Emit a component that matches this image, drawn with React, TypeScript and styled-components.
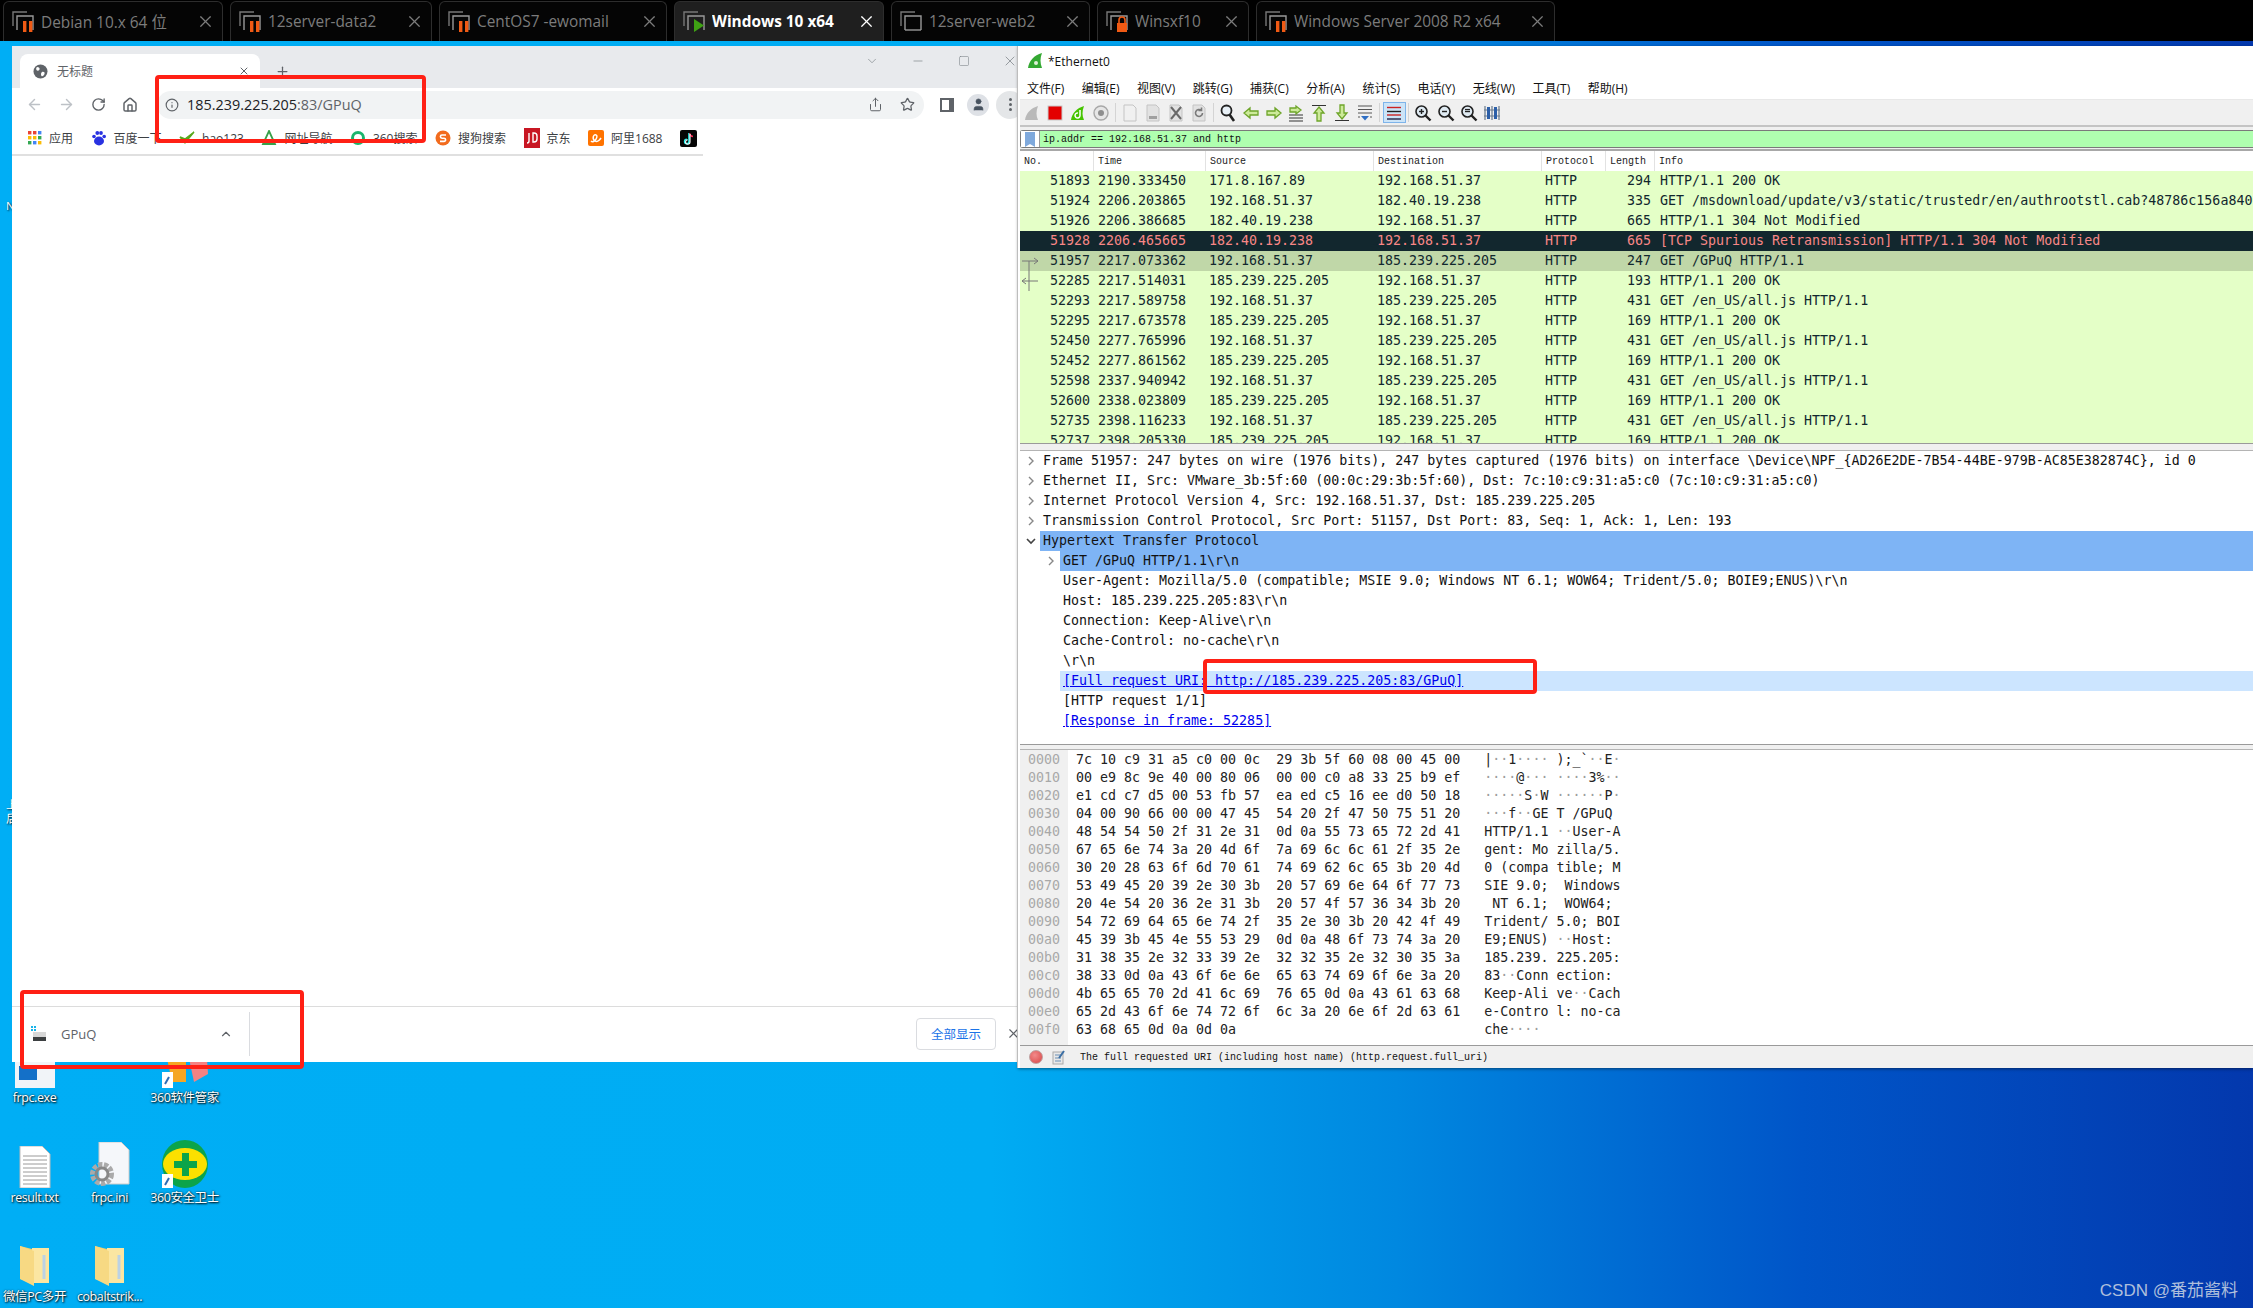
import React from "react";
import styled, { createGlobalStyle } from "styled-components";
import { ArrowLeft, ArrowRight, RotateCw, Home, Info, Share, Star, ChevronUp, ChevronDown, Minus, Square, X, Plus, User } from "lucide-react";

const MONO = `"DejaVu Sans Mono", "Liberation Mono", monospace`;
const SMALLMONO = `"Liberation Mono", monospace`;
const UI = `"Open Sans", "Noto Sans CJK SC", sans-serif`;

const Global = createGlobalStyle`
  html, body { margin: 0; padding: 0; background: #00aef5; overflow: hidden; }
  * { box-sizing: border-box; }
`;

const Screen = styled.div`
  position: relative;
  width: 2253px;
  height: 1308px;
  overflow: hidden;
  font-family: ${UI};
  background: linear-gradient(90deg, #00aef5 0%, #00acf3 44%, #0088e0 62%, #0055c8 80%, #0338ad 100%);
`;

/* ---------- VM tab bar ---------- */
const TabBar = styled.div`
  display: flex;
  gap: 7px;
  height: 41px;
  padding: 1px 0 0 3px;
  background: #000;
`;
const Tab = styled.div<{ $w: number; $active?: boolean }>`
  display: flex;
  align-items: center;
  width: ${(p) => p.$w}px;
  padding: 0 7px 0 8px;
  gap: 6px;
  border: 1px solid #2d2d2d;
  border-bottom: none;
  border-radius: 6px 6px 0 0;
  background: ${(p) => (p.$active ? "#1f1f1f" : "#050505")};
  color: ${(p) => (p.$active ? "#fff" : "#7c7c7c")};
  font-size: 15.4px;
  font-weight: ${(p) => (p.$active ? 700 : 400)};
  white-space: nowrap;
`;
const TabLabel = styled.span`
  flex: 1;
  overflow: hidden;
`;

type VmState = "pause" | "play" | "lock" | "none";
const VmIcon = ({ state }: { state: VmState }) => (
  <svg width="23" height="22" viewBox="0 0 23 22" fill="none">
    <path d="M1 15V1h14" stroke="#777" strokeWidth="1.4" />
    <path d="M5 19V5h16v14" stroke="#999" strokeWidth="1.4" />
    {state === "none" && <path d="M5 19h16" stroke="#999" strokeWidth="1.4" />}
    {state === "pause" && (
      <>
        <rect x="11" y="10" width="3.4" height="11" fill="#f05a14" />
        <rect x="17" y="10" width="3.4" height="11" fill="#f05a14" />
      </>
    )}
    {state === "play" && <path d="M11 8l10 6.5-10 6.5z" fill="#3fa214" />}
    {state === "lock" && (
      <>
        <rect x="11" y="12" width="10" height="9" fill="#f05a14" />
        <path d="M13 12V9a3 3 0 016 0v3" stroke="#f05a14" strokeWidth="1.6" />
      </>
    )}
  </svg>
);

/* ---------- Chrome window ---------- */
const BrowserWindow = styled.div`
  position: absolute;
  left: 12px;
  top: 46px;
  width: 1006px;
  height: 1016px;
  display: flex;
  flex-direction: column;
  background: #fff;
`;
const ChromeStrip = styled.div`
  display: flex;
  align-items: flex-end;
  height: 42px;
  background: #e8eaed;
  color: #5f6368;
`;
const ChromeTab = styled.div`
  display: flex;
  align-items: center;
  width: 240px;
  height: 34px;
  margin-left: 8px;
  padding: 0 10px 0 13px;
  gap: 9px;
  background: #fff;
  border-radius: 8px 8px 0 0;
  font-size: 12px;
  color: #5f6368;
`;
const ChromeTabTitle = styled.span`
  flex: 1;
`;
const NewTab = styled.div`
  display: flex;
  align-items: center;
  justify-content: center;
  width: 24px;
  height: 24px;
  margin: 0 0 5px 10px;
`;
const Caption = styled.div`
  display: flex;
  align-items: center;
  gap: 30px;
  margin-left: auto;
  align-self: flex-start;
  height: 30px;
  color: #80868b;
`;
const CaptionBtn = styled.div`
  display: flex;
  justify-content: center;
  width: 16px;
`;
const ChromeToolbar = styled.div`
  display: flex;
  align-items: center;
  height: 34px;
  padding: 0 0 1px 6px;
  color: #5f6368;
`;
const NavBtn = styled.div<{ $dim?: boolean }>`
  display: flex;
  align-items: center;
  justify-content: center;
  flex: none;
  width: 32px;
  color: ${(p) => (p.$dim ? "#bdc1c6" : "#5f6368")};
`;
const Omnibox = styled.div`
  display: flex;
  align-items: center;
  flex: none;
  width: 767px;
  height: 28px;
  margin-left: 11px;
  padding: 0 8px;
  gap: 8px;
  border-radius: 14px;
  background: #f1f3f4;
  font-size: 14.4px;
  color: #202124;
`;
const Url = styled.span`
  flex: 1;
`;
const UrlDim = styled.span`
  color: #5f6368;
`;
const OmniIcons = styled.div`
  display: flex;
  gap: 17px;
  padding-right: 1px;
`;
const SidePanel = styled.div`
  flex: none;
  width: 14px;
  height: 14px;
  margin-left: 16px;
  border: 2px solid #5f6368;
  border-right-width: 5px;
  background: #fff;
`;
const Avatar = styled.div`
  display: flex;
  align-items: center;
  justify-content: center;
  flex: none;
  width: 22px;
  height: 22px;
  margin-left: 13px;
  border-radius: 50%;
  background: #dee1e6;
  color: #47525f;
`;
const MenuDots = styled.div`
  display: flex;
  flex-direction: column;
  align-items: center;
  justify-content: center;
  flex: none;
  gap: 2px;
  width: 28px;
  height: 28px;
  margin-left: 7px;
  border-radius: 50%;
  background: #e4e6e8;
`;
const Dot = styled.i`
  width: 3px;
  height: 3px;
  border-radius: 50%;
  background: #5f6368;
`;
const Bookmarks = styled.div`
  display: flex;
  align-items: center;
  height: 34px;
  width: 691px;
  padding-left: 16px;
  gap: 17.5px;
  border-bottom: 2px solid #e0e0e0;
  font-size: 12px;
  color: #3c4043;
  white-space: nowrap;
`;
const Bookmark = styled.div`
  display: flex;
  align-items: center;
  gap: 7px;
`;
const PageBody = styled.div`
  flex: 1;
`;
const DownloadBar = styled.div`
  display: flex;
  align-items: center;
  height: 56px;
  border-top: 1px solid #dcdcdc;
  padding: 0 0 2px 18px;
  background: #fff;
`;
const DownloadName = styled.span`
  margin-left: 14px;
  width: 158px;
  font-size: 13px;
  color: #5f6368;
`;
const DownloadDivider = styled.div`
  width: 1px;
  height: 44px;
  margin-left: 16px;
  background: #dadce0;
`;
const ShowAll = styled.div`
  display: flex;
  align-items: center;
  justify-content: center;
  width: 80px;
  height: 32px;
  margin-left: auto;
  border: 1px solid #dadce0;
  border-radius: 4px;
  font-size: 12.5px;
  color: #1a73e8;
`;
const BarClose = styled.div`
  display: flex;
  width: 25px;
  margin-right: -3px;
  justify-content: flex-end;
  color: #5f6368;
`;

/* ---------- Wireshark window ---------- */
const WiresharkWindow = styled.div`
  position: absolute;
  left: 1018px;
  top: 46px;
  width: 1235px;
  height: 1022px;
  display: flex;
  flex-direction: column;
  padding-left: 2px;
  background: #fff;
  box-shadow: -1px 0 0 #bdbdbd, 0 1px 3px rgba(0, 0, 0, 0.45);
  color: #111;
`;
const TitleBar = styled.div`
  display: flex;
  align-items: center;
  gap: 5px;
  height: 30px;
  padding-left: 7px;
  font-size: 12px;
`;
const MenuBar = styled.div`
  display: flex;
  align-items: center;
  height: 24px;
  padding-left: 7px;
  gap: 17.5px;
  font-size: 12px;
  border-bottom: 1px solid #e8e8e8;
`;
const MenuItem = styled.span`
  letter-spacing: 0;
`;
const WsToolbar = styled.div`
  display: flex;
  align-items: center;
  height: 27px;
  padding-left: 1px;
  background: #f0f0f0;
  border-bottom: 2px solid #c4c4c4;
`;
const ToolBtn = styled.div<{ $on?: boolean }>`
  display: flex;
  align-items: center;
  justify-content: center;
  width: 22.85px;
  height: 21px;
  border: 1px solid ${(p) => (p.$on ? "#7eb4ea" : "transparent")};
  background: ${(p) => (p.$on ? "#cce4f7" : "transparent")};
`;
const ToolSep = styled.div`
  width: 1px;
  height: 19px;
  margin: 0 2.7px;
  background: #d4d4d4;
`;
const FilterWrap = styled.div`
  height: 24px;
  padding: 3px 0;
  background: #f0f0f0;
  border-bottom: 2px solid #a8a8a8;
`;
const FilterBar = styled.div`
  display: flex;
  align-items: center;
  height: 18px;
  background: #afffaf;
  border-top: 1px solid #7a7a7a;
  border-bottom: 1px solid #7a7a7a;
  border-left: 1px solid #7a7a7a;
  border-radius: 3px 0 0 3px;
  font: 10px ${SMALLMONO};
  color: #111;
`;
const BookmarkCell = styled.div`
  display: flex;
  align-items: center;
  justify-content: center;
  width: 19px;
  height: 100%;
  margin-right: 3px;
  background: #fff;
  border-right: 1px solid #9a9a9a;
`;
const PacketHead = styled.div`
  display: grid;
  grid-template-columns: 73px 112px 168px 168px 64px 49px 1fr;
  height: 20px;
  background: #fff;
  font: 10px ${SMALLMONO};
  color: #222;
`;
const HeadCell = styled.div<{ $first?: boolean }>`
  display: flex;
  align-items: center;
  padding: 1px 0 0 4px;
  border-left: ${(p) => (p.$first ? "none" : "1px solid #e2e2e2")};
`;
const PacketList = styled.div`
  height: 272px;
  overflow: hidden;
`;
const PacketRow = styled.div<{ $kind: string }>`
  display: grid;
  grid-template-columns: 70px 119px 168px 168px 60px 46px 1fr;
  height: 20px;
  font: 13.3px/20px ${MONO};
  white-space: nowrap;
  overflow: hidden;
  background: ${(p) => (p.$kind === "dark" ? "#12272e" : p.$kind === "sel" ? "#c0d7a8" : "#e4ffc7")};
  color: ${(p) => (p.$kind === "dark" ? "#f78787" : "#12272e")};
`;
const NoCell = styled.div`
  position: relative;
  text-align: right;
`;
const RelMark = styled.svg`
  position: absolute;
  left: 0;
  top: 0;
`;
const TimeCell = styled.div`
  padding-left: 8px;
`;
const LenCell = styled.div`
  text-align: right;
`;
const InfoCell = styled.div`
  padding-left: 9px;
`;
const Splitter = styled.div<{ $h: number }>`
  height: ${(p) => p.$h}px;
  flex: none;
  background: #f0f0f0;
  border-top: 1px solid #9a9a9a;
  border-bottom: 1px solid #b4b4b4;
`;
const Details = styled.div`
  height: 293px;
  font: 13.3px/20px ${MONO};
  color: #111;
  white-space: nowrap;
  overflow: hidden;
`;
const DetailRow = styled.div<{ $indent: number }>`
  display: flex;
  height: 20px;
  padding-left: ${(p) => 2 + p.$indent * 20}px;
`;
const Twisty = styled.div`
  display: flex;
  align-items: center;
  justify-content: center;
  width: 18px;
  color: #777;
`;
const DetailLabel = styled.div<{ $sel?: string; $link?: boolean }>`
  flex: 1;
  padding-left: 3px;
  background: ${(p) => (p.$sel === "blue" ? "#7eb4f5" : p.$sel === "light" ? "#cce5ff" : "transparent")};
  color: ${(p) => (p.$link ? "#0000ee" : "#111")};
  text-decoration: ${(p) => (p.$link ? "underline" : "none")};
`;
const Hex = styled.div`
  display: flex;
  flex: 1;
  font: 13.3px/18px ${MONO};
  white-space: pre;
`;
const HexGutter = styled.div`
  width: 48px;
  padding: 1px 0 0 8px;
  background: #f0f0f0;
  color: #a8a8a8;
`;
const HexBody = styled.div`
  flex: 1;
  padding: 1px 0 0 8px;
  color: #222;
`;
const Unprintable = styled.span`
  color: #9c9c9c;
`;
const StatusBar = styled.div`
  display: flex;
  align-items: center;
  flex: none;
  height: 23px;
  padding-left: 9px;
  gap: 9px;
  background: #f0f0f0;
  border-top: 1px solid #9a9a9a;
  font: 10px ${SMALLMONO};
  color: #111;
`;
const StatusText = styled.span`
  margin-left: 5px;
`;
const StatusDot = styled.div`
  width: 14px;
  height: 14px;
  border-radius: 50%;
  background: radial-gradient(circle at 40% 35%, #f28a8a, #d84545);
  border: 1px solid #c0a0a0;
`;

/* ---------- Desktop ---------- */
const DesktopIcons = styled.div`
  position: absolute;
  left: 0;
  top: 1039px;
  display: grid;
  grid-template-columns: repeat(3, 75px);
  grid-auto-rows: 99.5px;
  margin-left: -3px;
`;
const DesktopIcon = styled.div`
  display: flex;
  flex-direction: column;
  align-items: center;
  justify-content: flex-end;
  height: 66px;
  gap: 3px;
  color: #fff;
  font-size: 12.5px;
  line-height: 14px;
  letter-spacing: -0.4px;
  text-shadow: 1px 1px 2px #000, 0 0 2px rgba(0, 0, 0, 0.7);
  white-space: nowrap;
`;
const EdgeLabel = styled.div<{ $top: number }>`
  position: absolute;
  left: 6px;
  top: ${(p) => p.$top}px;
  color: #fff;
  font-size: 11.5px;
  line-height: 14px;
  text-shadow: 1px 1px 2px #000;
`;
const Watermark = styled.div`
  position: absolute;
  right: 15px;
  bottom: 7px;
  color: #aebfdc;
  font-size: 17px;
  font-family: "Liberation Sans", "Noto Sans CJK SC", sans-serif;
`;
const RedBox = styled.div<{ $l: number; $t: number; $w: number; $h: number }>`
  position: absolute;
  left: ${(p) => p.$l}px;
  top: ${(p) => p.$t}px;
  width: ${(p) => p.$w}px;
  height: ${(p) => p.$h}px;
  border: 4px solid #ff2015;
  border-radius: 4px;
`;

/* ---------- Data ---------- */
const tabs: { name: string; w: number; st: VmState; active?: boolean }[] = [
  { name: "Debian 10.x 64 位", w: 220, st: "pause" },
  { name: "12server-data2", w: 202, st: "pause" },
  { name: "CentOS7 -ewomail", w: 228, st: "pause" },
  { name: "Windows 10 x64", w: 210, st: "play", active: true },
  { name: "12server-web2", w: 199, st: "none" },
  { name: "Winsxf10", w: 152, st: "lock" },
  { name: "Windows Server 2008 R2 x64", w: 299, st: "pause" },
];

const A = "192.168.51.37", B = "185.239.225.205", C = "182.40.19.238";
const OK = "HTTP/1.1 200 OK", JS = "GET /en_US/all.js HTTP/1.1";
const packets = [
  ["51893", "2190.333450", "171.8.167.89", A, "294", OK],
  ["51924", "2206.203865", A, C, "335", "GET /msdownload/update/v3/static/trustedr/en/authrootstl.cab?48786c156a84065c HTTP/1.1"],
  ["51926", "2206.386685", C, A, "665", "HTTP/1.1 304 Not Modified"],
  ["51928", "2206.465665", C, A, "665", "[TCP Spurious Retransmission] HTTP/1.1 304 Not Modified", "dark"],
  ["51957", "2217.073362", A, B, "247", "GET /GPuQ HTTP/1.1", "sel", "out"],
  ["52285", "2217.514031", B, A, "193", OK, "", "in"],
  ["52293", "2217.589758", A, B, "431", JS],
  ["52295", "2217.673578", B, A, "169", OK],
  ["52450", "2277.765996", A, B, "431", JS],
  ["52452", "2277.861562", B, A, "169", OK],
  ["52598", "2337.940942", A, B, "431", JS],
  ["52600", "2338.023809", B, A, "169", OK],
  ["52735", "2398.116233", A, B, "431", JS],
  ["52737", "2398.205330", B, A, "169", OK],
];

type Det = { t: string; i?: number; tw?: "r" | "d"; sel?: string; link?: boolean };
const details: Det[] = [
  { t: "Frame 51957: 247 bytes on wire (1976 bits), 247 bytes captured (1976 bits) on interface \\Device\\NPF_{AD26E2DE-7B54-44BE-979B-AC85E382874C}, id 0", tw: "r" },
  { t: "Ethernet II, Src: VMware_3b:5f:60 (00:0c:29:3b:5f:60), Dst: 7c:10:c9:31:a5:c0 (7c:10:c9:31:a5:c0)", tw: "r" },
  { t: "Internet Protocol Version 4, Src: 192.168.51.37, Dst: 185.239.225.205", tw: "r" },
  { t: "Transmission Control Protocol, Src Port: 51157, Dst Port: 83, Seq: 1, Ack: 1, Len: 193", tw: "r" },
  { t: "Hypertext Transfer Protocol", tw: "d", sel: "blue" },
  { t: "GET /GPuQ HTTP/1.1\\r\\n", i: 1, tw: "r", sel: "blue" },
  { t: "User-Agent: Mozilla/5.0 (compatible; MSIE 9.0; Windows NT 6.1; WOW64; Trident/5.0; BOIE9;ENUS)\\r\\n", i: 1 },
  { t: "Host: 185.239.225.205:83\\r\\n", i: 1 },
  { t: "Connection: Keep-Alive\\r\\n", i: 1 },
  { t: "Cache-Control: no-cache\\r\\n", i: 1 },
  { t: "\\r\\n", i: 1 },
  { t: "[Full request URI: http://185.239.225.205:83/GPuQ]", i: 1, sel: "light", link: true },
  { t: "[HTTP request 1/1]", i: 1 },
  { t: "[Response in frame: 52285]", i: 1, link: true },
];

const hexRows = [
  "7c 10 c9 31 a5 c0 00 0c 29 3b 5f 60 08 00 45 00",
  "00 e9 8c 9e 40 00 80 06 00 00 c0 a8 33 25 b9 ef",
  "e1 cd c7 d5 00 53 fb 57 ea ed c5 16 ee d0 50 18",
  "04 00 90 66 00 00 47 45 54 20 2f 47 50 75 51 20",
  "48 54 54 50 2f 31 2e 31 0d 0a 55 73 65 72 2d 41",
  "67 65 6e 74 3a 20 4d 6f 7a 69 6c 6c 61 2f 35 2e",
  "30 20 28 63 6f 6d 70 61 74 69 62 6c 65 3b 20 4d",
  "53 49 45 20 39 2e 30 3b 20 57 69 6e 64 6f 77 73",
  "20 4e 54 20 36 2e 31 3b 20 57 4f 57 36 34 3b 20",
  "54 72 69 64 65 6e 74 2f 35 2e 30 3b 20 42 4f 49",
  "45 39 3b 45 4e 55 53 29 0d 0a 48 6f 73 74 3a 20",
  "31 38 35 2e 32 33 39 2e 32 32 35 2e 32 30 35 3a",
  "38 33 0d 0a 43 6f 6e 6e 65 63 74 69 6f 6e 3a 20",
  "4b 65 65 70 2d 41 6c 69 76 65 0d 0a 43 61 63 68",
  "65 2d 43 6f 6e 74 72 6f 6c 3a 20 6e 6f 2d 63 61",
  "63 68 65 0d 0a 0d 0a",
];

const HexLine = ({ row }: { row: string }) => {
  const bytes = row.split(" ");
  const left = bytes.slice(0, 8).join(" ");
  const right = bytes.slice(8).join(" ");
  const hex = (left + "  " + right).padEnd(51, " ");
  const ascii = bytes.map((b, i) => {
    const c = parseInt(b, 16);
    const gap = i === 8 ? " " : "";
    if (c >= 32 && c < 127) return <span key={i}>{gap + String.fromCharCode(c)}</span>;
    return <Unprintable key={i}>{gap + "·"}</Unprintable>;
  });
  return (
    <div>
      {hex}
      {ascii}
    </div>
  );
};

/* ---------- Wireshark toolbar drawings ---------- */
const fin = "M2 16C3 9 8 4 15 2c-2 5-2 10 0 14z";
const Sv = ({ children, s = 18 }: { children: React.ReactNode; s?: number }) => (
  <svg width={s} height={s} viewBox="0 0 18 18" fill="none">
    {children}
  </svg>
);
const Page = ({ c = "#e2e2e2" }: { c?: string }) => <path d="M3 1h9l3 3v13H3z" fill={c} stroke="#c4c4c4" />;
const ArrowShape = ({ d }: { d: string }) => <path d={d} fill="#cdea9a" stroke="#6ea52a" strokeWidth="1.3" />;
const Lines = () => <path d="M2 11h14M2 14h14M2 17h14" stroke="#333" />;
const Lens = ({ k }: { k: "in" | "out" | "one" }) => (
  <Sv>
    <circle cx="7.5" cy="7.5" r="5.5" fill="#dfeaf2" stroke="#222" strokeWidth="1.6" />
    <path d="M11.5 11.5l5 5" stroke="#222" strokeWidth="2.4" />
    <path d="M5 7.5h5" stroke="#222" strokeWidth="1.4" />
    {k === "in" && <path d="M7.5 5v5" stroke="#222" strokeWidth="1.4" />}
    {k === "one" && <path d="M5 5.5h5" stroke="#222" strokeWidth="1.2" />}
  </Sv>
);
const toolbar: (React.ReactNode | "sep")[] = [
  <Sv key="a"><path d={fin} fill="#b9b9b9" /></Sv>,
  <Sv key="b"><rect x="2" y="2" width="14" height="14" fill="#e30000" stroke="#c9c9c9" /></Sv>,
  <Sv key="c"><path d={fin} fill="#46c400" /><path d="M11 6v5a2.5 2.5 0 11-2-2" stroke="#fff" strokeWidth="1.5" /></Sv>,
  <Sv key="d"><circle cx="9" cy="9" r="7" fill="#e6e6e6" stroke="#a8a8a8" strokeWidth="1.4" /><circle cx="9" cy="9" r="3" fill="#8e8e8e" /></Sv>,
  "sep",
  <Sv key="e"><Page c="#f0f0f0" /></Sv>,
  <Sv key="f"><Page /><path d="M5 12h8v3H5z" fill="#a0a0a0" /></Sv>,
  <Sv key="g"><Page /><path d="M4 3l10 12M14 3L4 15" stroke="#6a6a6a" strokeWidth="2" /></Sv>,
  <Sv key="h"><Page /><path d="M12.5 9a3.5 3.5 0 11-1.2-2.7M11.5 3.5v3h-3" stroke="#7a7a7a" strokeWidth="1.6" /></Sv>,
  "sep",
  <Sv key="i"><circle cx="7.5" cy="6.5" r="5" fill="#e8f0f6" stroke="#222" strokeWidth="1.8" /><path d="M10.5 10.5l4.5 6.5" stroke="#222" strokeWidth="2.6" /></Sv>,
  <Sv key="j"><ArrowShape d="M2 9l6-5v3h8v4H8v3z" /></Sv>,
  <Sv key="k"><ArrowShape d="M16 9l-6-5v3H2v4h8v3z" /></Sv>,
  <Sv key="l"><Lines /><ArrowShape d="M14 6L9 2v2H3v4h6v2z" /></Sv>,
  <Sv key="m"><path d="M2 1.5h14" stroke="#333" /><ArrowShape d="M9 3l5 6h-3v8H7V9H4z" /></Sv>,
  <Sv key="n"><path d="M2 16.5h14" stroke="#333" /><ArrowShape d="M9 15l5-6h-3V1H7v8H4z" /></Sv>,
  <Sv key="o"><path d="M2 2h14M2 5.5h14M2 9h14" stroke="#555" /><path d="M5 12h8l-4 4.5z" fill="#2f6fc4" /><path d="M2 13h2M14 13h2" stroke="#555" /></Sv>,
  "sep",
  <ToolBtn key="p" $on><Sv><path d="M2 3.5h14" stroke="#c22" strokeWidth="1.4" /><path d="M2 7.5h14" stroke="#222" strokeWidth="1.4" /><path d="M2 11h14" stroke="#c22" strokeWidth="1.4" /><path d="M2 15h14" stroke="#224" strokeWidth="1.4" /></Sv></ToolBtn>,
  "sep",
  <Lens key="q" k="in" />,
  <Lens key="r" k="out" />,
  <Lens key="s" k="one" />,
  <Sv key="t"><path d="M2 2v14M9 2v14M16 2v14M1 6h16M1 12h16" stroke="#6a7b8c" strokeWidth="1.2" /><rect x="4" y="3" width="3" height="12" fill="#2c5fa8" /><rect x="11" y="3" width="3" height="12" fill="#2c5fa8" /></Sv>,
];

const menu = ["文件(F)", "编辑(E)", "视图(V)", "跳转(G)", "捕获(C)", "分析(A)", "统计(S)", "电话(Y)", "无线(W)", "工具(T)", "帮助(H)"];

const FolderIcon = () => (
  <svg width="34" height="42" viewBox="0 0 34 42">
    <path d="M2 1l12 3v33L2 34z" fill="#f3cf6c" />
    <path d="M14 3h17v35H14z" fill="#fbe6a2" />
    <path d="M2 34l14 7V6L2 1z" fill="#f7d983" />
    <path d="M26 10v24" stroke="#bcd2e4" strokeWidth="3" />
  </svg>
);

export default function App() {
  return (
    <Screen>
      <Global />
      <TabBar>
        {tabs.map((t) => (
          <Tab key={t.name} $w={t.w} $active={t.active}>
            <VmIcon state={t.st} />
            <TabLabel>{t.name}</TabLabel>
            <X size={19} strokeWidth={1.5} />
          </Tab>
        ))}
      </TabBar>

      <EdgeLabel $top={199}>N</EdgeLabel>
      <EdgeLabel $top={798}>上</EdgeLabel>
      <EdgeLabel $top={812}>后</EdgeLabel>

      <DesktopIcons>
        <DesktopIcon>
          <svg width="40" height="26" viewBox="0 0 40 26"><rect width="40" height="26" fill="#f1f4f8" /><rect x="4" y="4" width="18" height="14" fill="#1470c8" /></svg>
          frpc.exe
        </DesktopIcon>
        <div />
        <DesktopIcon>
          <svg width="46" height="44" viewBox="0 0 46 44"><path d="M2 0h22v38H10z" fill="#f5a623" /><path d="M24 0h20l2 30-14 8z" fill="#f58283" /><rect x="0" y="28" width="11" height="16" fill="#fff" /><path d="M3 40l4-7" stroke="#2d6db5" strokeWidth="2" /></svg>
          360软件管家
        </DesktopIcon>
        <DesktopIcon>
          <svg width="32" height="42" viewBox="0 0 32 42"><path d="M1 0h22l8 8v34H1z" fill="#fff" stroke="#bbb" /><path d="M4 10h24M4 14h24M4 18h24M4 22h24M4 26h24M4 30h24M4 34h24M4 38h24" stroke="#9a9a9a" /></svg>
          result.txt
        </DesktopIcon>
        <DesktopIcon>
          <svg width="40" height="46" viewBox="0 0 40 46"><path d="M9 0h22l8 8v34H9z" fill="#f5f7fa" stroke="#ccc" /><circle cx="12" cy="32" r="9" fill="none" stroke="#aaa" strokeWidth="6" strokeDasharray="4 1.5" /><circle cx="12" cy="32" r="6" fill="none" stroke="#888" strokeWidth="3" /></svg>
          frpc.ini
        </DesktopIcon>
        <DesktopIcon>
          <svg width="46" height="48" viewBox="0 0 46 48"><ellipse cx="23" cy="24" rx="23" ry="24" fill="#0ca44a" /><ellipse cx="23" cy="24" rx="22" ry="16" fill="#fbe000" /><path d="M20 13h7v8h8v7h-8v8h-7v-8h-8v-7h8z" fill="#0ca44a" /><rect x="0" y="34" width="11" height="14" fill="#fff" /><path d="M3 45l4-7" stroke="#2d6db5" strokeWidth="2" /></svg>
          360安全卫士
        </DesktopIcon>
        <DesktopIcon>
          <FolderIcon />
          微信PC多开
        </DesktopIcon>
        <DesktopIcon>
          <FolderIcon />
          cobaltstrik...
        </DesktopIcon>
      </DesktopIcons>

      <BrowserWindow>
        <ChromeStrip>
          <ChromeTab>
            <svg width="15" height="15" viewBox="0 0 15 15">
              <circle cx="7.5" cy="7.5" r="7" fill="#5f6368" />
              <path d="M4 3c2 0 3 1 2.5 2.5S4 7 3.5 6 3 4 4 3zM9 8c2-.5 3 .5 2.5 2S9.5 13 8.5 12 8 8.5 9 8z" fill="#fff" />
            </svg>
            <ChromeTabTitle>无标题</ChromeTabTitle>
            <X size={12} strokeWidth={2} />
          </ChromeTab>
          <NewTab>
            <Plus size={15} strokeWidth={2} />
          </NewTab>
          <Caption>
            <CaptionBtn><ChevronDown size={14} strokeWidth={1.2} /></CaptionBtn>
            <CaptionBtn><Minus size={14} strokeWidth={1.2} /></CaptionBtn>
            <CaptionBtn><Square size={12} strokeWidth={1.2} /></CaptionBtn>
            <CaptionBtn><X size={16} strokeWidth={1.2} /></CaptionBtn>
          </Caption>
        </ChromeStrip>
        <ChromeToolbar>
          <NavBtn $dim><ArrowLeft size={17} strokeWidth={2} /></NavBtn>
          <NavBtn $dim><ArrowRight size={17} strokeWidth={2} /></NavBtn>
          <NavBtn><RotateCw size={15} strokeWidth={2.2} /></NavBtn>
          <NavBtn><Home size={16} strokeWidth={2.2} /></NavBtn>
          <Omnibox>
            <Info size={14} strokeWidth={2} color="#5f6368" />
            <Url>185.239.225.205<UrlDim>:83/GPuQ</UrlDim></Url>
            <OmniIcons>
              <Share size={15} strokeWidth={1.6} color="#5f6368" />
              <Star size={15} strokeWidth={2} color="#5f6368" />
            </OmniIcons>
          </Omnibox>
          <SidePanel />
          <Avatar><User size={15} fill="#47525f" strokeWidth={1} /></Avatar>
          <MenuDots><Dot /><Dot /><Dot /></MenuDots>
        </ChromeToolbar>
        <Bookmarks>
          <Bookmark>
            <svg width="14" height="14" viewBox="0 0 14 14">
              {["#ea4335", "#ea4335", "#4285f4", "#fbbc04", "#fbbc04", "#34a853", "#34a853", "#4285f4", "#fbbc04"].map((c, i) => (
                <rect key={i} x={(i % 3) * 5} y={Math.floor(i / 3) * 5} width="3.4" height="3.4" fill={c} />
              ))}
            </svg>
            应用
          </Bookmark>
          <Bookmark>
            <svg width="16" height="16" viewBox="0 0 16 16"><ellipse cx="8" cy="11" rx="5" ry="4.4" fill="#2932e1" /><circle cx="3" cy="6.5" r="1.8" fill="#2932e1" /><circle cx="6.3" cy="3" r="1.9" fill="#2932e1" /><circle cx="10" cy="3" r="1.9" fill="#2932e1" /><circle cx="13.2" cy="6.5" r="1.8" fill="#2932e1" /></svg>
            百度一下
          </Bookmark>
          <Bookmark>
            <svg width="16" height="16" viewBox="0 0 16 16"><path d="M1 7l5 6 9-11-9 7z" fill="#58a81c" stroke="#58a81c" strokeWidth="1.4" /></svg>
            hao123
          </Bookmark>
          <Bookmark>
            <svg width="16" height="16" viewBox="0 0 16 16"><path d="M8 1l6 13H2z" fill="none" stroke="#38a04a" strokeWidth="1.8" /></svg>
            网址导航
          </Bookmark>
          <Bookmark>
            <svg width="16" height="16" viewBox="0 0 16 16"><circle cx="8" cy="8" r="5.5" fill="none" stroke="#1bb56d" strokeWidth="3" /></svg>
            360搜索
          </Bookmark>
          <Bookmark>
            <svg width="16" height="16" viewBox="0 0 16 16"><circle cx="8" cy="8" r="7.5" fill="#f26b1d" /><path d="M11 5H7a1.6 1.6 0 000 3.2h2a1.6 1.6 0 010 3.2H5" stroke="#fff" strokeWidth="1.6" fill="none" /></svg>
            搜狗搜索
          </Bookmark>
          <Bookmark>
            <svg width="16" height="20" viewBox="0 0 16 20"><rect width="16" height="20" fill="#c81623" /><path d="M5 5v8a2 2 0 01-2 2M9 5v9h1a3 3 0 003-3V8a3 3 0 00-3-3z" stroke="#fff" strokeWidth="1.4" fill="none" /></svg>
            京东
          </Bookmark>
          <Bookmark>
            <svg width="16" height="16" viewBox="0 0 16 16"><rect width="16" height="16" rx="2" fill="#ff7300" /><path d="M3 11c3 3 8-5 5-6S4 9 7 11s6-3 6-3" stroke="#fff" strokeWidth="1.5" fill="none" /></svg>
            阿里1688
          </Bookmark>
          <Bookmark>
            <svg width="17" height="17" viewBox="0 0 17 17"><rect width="17" height="17" rx="2" fill="#050505" /><path d="M9 3v8.5a2.2 2.2 0 11-2.2-2.2" stroke="#25f4ee" strokeWidth="1.6" fill="none" /><path d="M9.6 3.4c.4 1.9 1.7 3 3.4 3.2" stroke="#fe2c55" strokeWidth="1.5" fill="none" /><path d="M10 4v8a2.2 2.2 0 11-2.2-2.2" stroke="#fff" strokeWidth="1.1" fill="none" /></svg>
          </Bookmark>
          <svg width="90" height="6" viewBox="0 0 90 6"><path d="M4 5h5" stroke="#999" /><path d="M36 5h8" stroke="#4ac0f0" /><path d="M48 5h2M54 5h2M60 5h2M66 5h2" stroke="#777" /></svg>
        </Bookmarks>
        <PageBody />
        <DownloadBar>
          <svg width="17" height="17" viewBox="0 0 17 17">
            <path d="M1 1h2v2H1zM4 1h2v2H4zM1 4h2v2H1zM4 4h2v2H4z" fill="#17b4ea" />
            <rect x="3" y="7" width="13" height="5" fill="#d7d7d7" />
            <rect x="3" y="12" width="13" height="4" fill="#3c3f41" />
          </svg>
          <DownloadName>GPuQ</DownloadName>
          <ChevronUp size={14} strokeWidth={2} color="#5f6368" />
          <DownloadDivider />
          <ShowAll>全部显示</ShowAll>
          <BarClose><X size={15} strokeWidth={1.8} /></BarClose>
        </DownloadBar>
      </BrowserWindow>

      <WiresharkWindow>
        <TitleBar>
          <svg width="16" height="18" viewBox="0 0 16 18"><path d="M1 16C2 9 7 3 15 1c-2 5-2 10 0 15z" fill="#34a832" /><circle cx="9" cy="11" r="2" fill="#dff2d8" /></svg>
          *Ethernet0
        </TitleBar>
        <MenuBar>
          {menu.map((m) => (
            <MenuItem key={m}>{m}</MenuItem>
          ))}
        </MenuBar>
        <WsToolbar>
          {toolbar.map((t, i) =>
            t === "sep" ? <ToolSep key={i} /> : React.isValidElement(t) && t.type === ToolBtn ? t : <ToolBtn key={i}>{t}</ToolBtn>
          )}
        </WsToolbar>
        <FilterWrap>
          <FilterBar>
            <BookmarkCell>
              <svg width="10" height="15" viewBox="0 0 10 15"><path d="M0 0h10v15l-5-3-5 3z" fill="#7fa9dc" /></svg>
            </BookmarkCell>
            ip.addr == 192.168.51.37 and http
          </FilterBar>
        </FilterWrap>
        <PacketHead>
          {["No.", "Time", "Source", "Destination", "Protocol", "Length", "Info"].map((h, i) => (
            <HeadCell key={h} $first={i === 0}>{h}</HeadCell>
          ))}
        </PacketHead>
        <PacketList>
          {packets.map((p) => (
            <PacketRow key={p[0]} $kind={p[6] || ""}>
              <NoCell>
                {p[7] === "out" && (
                  <RelMark width="20" height="20" viewBox="0 0 20 20"><path d="M2 10h16M14 7l4 3-4 3M9 10v10" stroke="#777" fill="none" /></RelMark>
                )}
                {p[7] === "in" && (
                  <RelMark width="20" height="20" viewBox="0 0 20 20"><path d="M2 10h16M6 7l-4 3 4 3M9 0v20" stroke="#777" fill="none" /></RelMark>
                )}
                {p[0]}
              </NoCell>
              <TimeCell>{p[1]}</TimeCell>
              <div>{p[2]}</div>
              <div>{p[3]}</div>
              <div>HTTP</div>
              <LenCell>{p[4]}</LenCell>
              <InfoCell>{p[5]}</InfoCell>
            </PacketRow>
          ))}
        </PacketList>
        <Splitter $h={8} />
        <Details>
          {details.map((d) => (
            <DetailRow key={d.t} $indent={d.i || 0}>
              <Twisty>
                {d.tw === "r" && <svg width="8" height="12" viewBox="0 0 8 12"><path d="M2 2l4 4-4 4" stroke="#888" strokeWidth="1.4" fill="none" /></svg>}
                {d.tw === "d" && <svg width="12" height="8" viewBox="0 0 12 8"><path d="M2 2l4 4 4-4" stroke="#444" strokeWidth="1.6" fill="none" /></svg>}
              </Twisty>
              <DetailLabel $sel={d.sel} $link={d.link}>{d.t}</DetailLabel>
            </DetailRow>
          ))}
        </Details>
        <Splitter $h={6} />
        <Hex>
          <HexGutter>
            {hexRows.map((_, i) => (
              <div key={i}>{(i * 16).toString(16).padStart(4, "0")}</div>
            ))}
          </HexGutter>
          <HexBody>
            {hexRows.map((r, i) => (
              <HexLine key={i} row={r} />
            ))}
          </HexBody>
        </Hex>
        <StatusBar>
          <StatusDot />
          <svg width="14" height="15" viewBox="0 0 14 15"><rect x="1" y="2" width="10" height="12" fill="#e8e8e8" stroke="#aaa" /><path d="M3 5h6M3 8h6M3 11h6" stroke="#6b8fb5" /><path d="M12 1L7 8" stroke="#3a6ea5" strokeWidth="2" /></svg>
          <StatusText>The full requested URI (including host name) (http.request.full_uri)</StatusText>
        </StatusBar>
      </WiresharkWindow>

      <RedBox $l={155} $t={75} $w={271} $h={68} />
      <RedBox $l={20} $t={990} $w={284} $h={79} />
      <RedBox $l={1203} $t={659} $w={334} $h={35} />
      <Watermark>CSDN @番茄酱料</Watermark>
    </Screen>
  );
}
